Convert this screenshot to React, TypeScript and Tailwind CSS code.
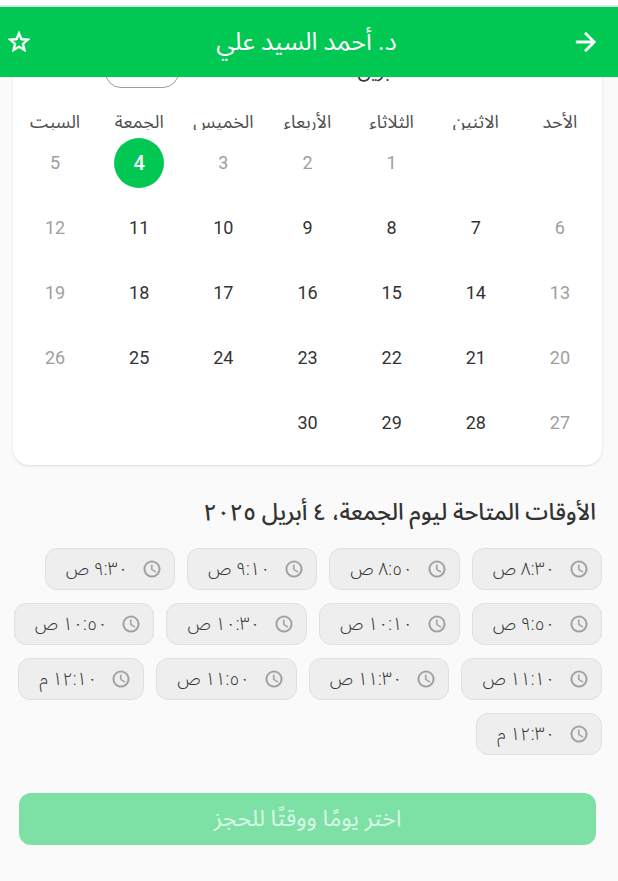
import React from "react";

const DAYS = ["الأحد", "الاثنين", "الثلاثاء", "الأربعاء", "الخميس", "الجمعة", "السبت"];

const WEEKS: (number | null)[][] = [
  [null, null, 1, 2, 3, 4, 5],
  [6, 7, 8, 9, 10, 11, 12],
  [13, 14, 15, 16, 17, 18, 19],
  [20, 21, 22, 23, 24, 25, 26],
  [27, 28, 29, 30, null, null, null],
];

const SLOTS = [
  "٨:٣٠ ص", "٨:٥٠ ص", "٩:١٠ ص", "٩:٣٠ ص",
  "٩:٥٠ ص", "١٠:١٠ ص", "١٠:٣٠ ص", "١٠:٥٠ ص",
  "١١:١٠ ص", "١١:٣٠ ص", "١١:٥٠ ص", "١٢:١٠ م",
  "١٢:٣٠ م",
];

const SELECTED = 4;

function ForwardIcon() {
  return (
    <svg viewBox="0 0 24 24" className="size-[30px] fill-white stroke-white" strokeWidth="0.3" aria-hidden="true">
      <path d="M12 4l-1.41 1.41L16.17 11H4v2h12.17l-5.58 5.59L12 20l8-8z" />
    </svg>
  );
}

function StarIcon() {
  return (
    <svg viewBox="0 0 24 24" className="size-[26px] fill-white stroke-white" strokeWidth="0.6" aria-hidden="true">
      <path d="M22 9.24l-7.19-.62L12 2 9.19 8.63 2 9.24l5.46 4.73L5.82 21 12 17.27 18.18 21l-1.63-7.03L22 9.24zM12 15.4l-3.76 2.27 1-4.28-3.32-2.88 4.38-.38L12 6.1l1.71 4.04 4.38.38-3.32 2.88 1 4.28L12 15.4z" />
    </svg>
  );
}

function ClockIcon() {
  return (
    <svg viewBox="0 0 24 24" className="size-5 shrink-0 fill-[#9e9e9e] stroke-[#9e9e9e]" strokeWidth="0.3" aria-hidden="true">
      <path d="M11.99 2C6.47 2 2 6.48 2 12s4.47 10 9.99 10C17.52 22 22 17.52 22 12S17.52 2 11.99 2zM12 20c-4.42 0-8-3.58-8-8s3.58-8 8-8 8 3.58 8 8-3.58 8-8 8zM12.5 7H11v6l5.25 3.15.75-1.23-4.5-2.67z" />
    </svg>
  );
}

function Chevron({ path }: { path: string }) {
  return (
    <svg viewBox="0 0 24 24" className="size-6 fill-[#424242]" aria-hidden="true">
      <path d={path} />
    </svg>
  );
}

function Day({ day, column }: { day: number; column: number }) {
  if (day === SELECTED) {
    return (
      <button aria-pressed="true" className="size-[50px] rounded-full bg-[#00c853] text-xl font-medium text-white">
        {day}
      </button>
    );
  }
  const off = day < SELECTED || column === 0 || column === 6;
  return (
    <button disabled={off} className={off ? "size-[50px] text-lg text-[#9e9e9e]" : "size-[50px] text-lg text-[#333333]"}>
      {day}
    </button>
  );
}

export default function App() {
  return (
    <div
      dir="rtl"
      lang="ar"
      className="min-h-screen bg-[#fafafa] font-[Roboto,'Noto_Sans_Arabic','Noto_Sans',sans-serif] text-[#333333]"
    >
      <div className="h-[5px] bg-white" />
      <header className="border-t-2 border-[#e0e0e0] bg-[#00c853] text-white">
        <div className="flex h-[70px] items-center justify-between ps-[17px]">
          <button aria-label="رجوع"><ForwardIcon /></button>
          <h1 className="pe-1 text-[25px]">د. أحمد السيد علي</h1>
          <button aria-label="إضافة إلى المفضلة" className="px-1.5"><StarIcon /></button>
        </div>
      </header>

      <main>
        <div className="overflow-hidden ps-4 pe-[13px] pb-2">
          <section className="-mt-[27px] rounded-2xl bg-white pb-[10px] shadow">
            <div className="flex h-10 items-center px-8">
              <button aria-label="الشهر التالي"><Chevron path="M8.59 16.59L13.17 12 8.59 7.41 10 6l6 6-6 6z" /></button>
              <h2 className="flex-1 pe-7 text-center text-xl">أبريل</h2>
              <button aria-label="طريقة العرض" className="h-9 w-[74px] rounded-2xl border border-[#9e9e9e]" />
              <button aria-label="الشهر السابق" className="ms-9"><Chevron path="M15.41 7.41L14 6l-6 6 6 6 1.41-1.41L10.83 12z" /></button>
            </div>
            <table className="w-full table-fixed text-center">
              <thead>
                <tr>
                  {DAYS.map((d) => (
                    <th key={d} scope="col" className="p-0 pt-4 font-normal">
                      <div className="h-6 overflow-hidden text-lg leading-8 text-[#4f4f4f]">{d}</div>
                    </th>
                  ))}
                </tr>
              </thead>
              <tbody>
                {WEEKS.map((week, w) => (
                  <tr key={w} className="h-[65px]">
                    {week.map((day, c) => (
                      <td key={c} className="p-0">
                        {day !== null && <Day day={day} column={c} />}
                      </td>
                    ))}
                  </tr>
                ))}
              </tbody>
            </table>
          </section>
        </div>

        <section className="ps-4 pe-3">
          <h2 className="px-1.5 pt-6 text-[23px] leading-8 font-medium">الأوقات المتاحة ليوم الجمعة، ٤ أبريل ٢٠٢٥</h2>
          <div className="mt-[19px] flex flex-wrap gap-x-3 gap-y-[13px]">
            {SLOTS.map((s) => (
              <button
                key={s}
                className="flex h-[42px] items-center gap-3.5 rounded-xl border border-[#e0e0e0] bg-[#eeeeee] ps-3 pe-5 text-lg font-light"
              >
                <ClockIcon />
                {s}
              </button>
            ))}
          </div>
        </section>

        <div className="ps-[22px] pe-[19px] pt-[38px] pb-9">
          <button disabled className="h-[52px] w-full rounded-xl bg-[#7de1a6] text-[23px] text-[#d9f7e5]">
            اختر يومًا ووقتًا للحجز
          </button>
        </div>
      </main>
    </div>
  );
}
